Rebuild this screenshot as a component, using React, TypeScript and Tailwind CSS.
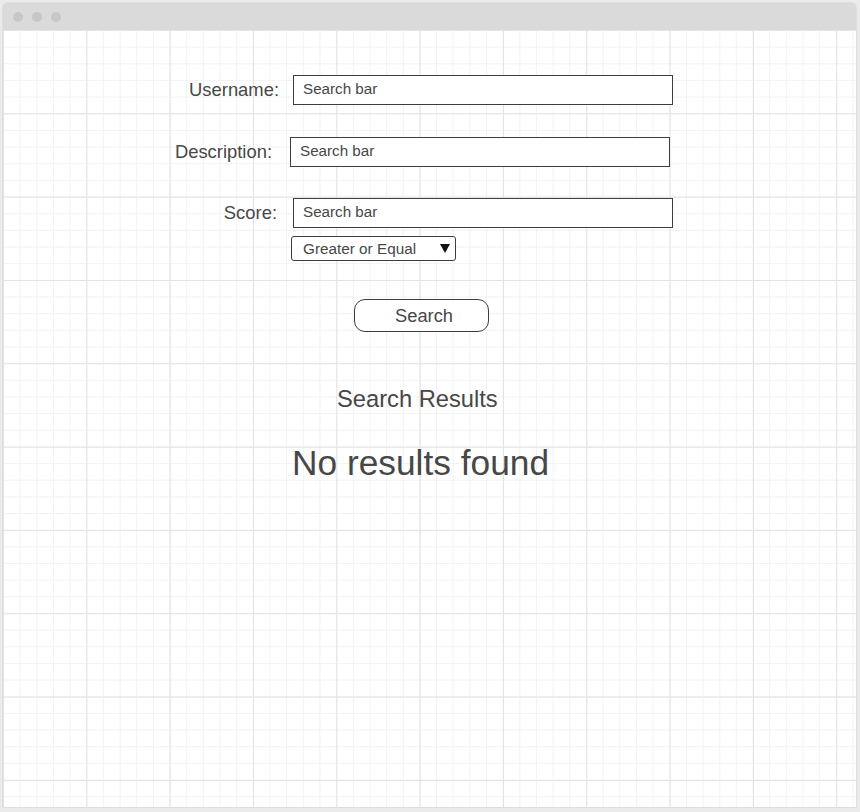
const fieldRows = [
  { label: "Username:", labelW: "w-[276px]", gap: "ml-[14px]", mt: "mt-[45px]" },
  { label: "Description:", labelW: "w-[269px]", gap: "ml-[18px]", mt: "mt-[32px]" },
  { label: "Score:", labelW: "w-[274px]", gap: "ml-[16px]", mt: "mt-[31px]" },
];

function SearchBar() {
  return (
    <div className="w-[380px] h-[30px] border border-[#3d3d3d] bg-white flex items-center pl-[9px] pb-[2px] text-[15.2px]">
      Search bar
    </div>
  );
}

export default function App() {
  return (
    <div
      className="w-[860px] h-[812px] bg-[#ebebeb] pt-[2px] pl-[2px] pr-[3px] pb-[4px] text-[#474747]"
      style={{ fontFamily: '"Liberation Sans", Arial, sans-serif' }}
    >
      <div className="w-full h-full flex flex-col border border-[#dedede] rounded-t-[5px] bg-white overflow-hidden">

        {/* Title bar */}
        <div className="h-[27px] shrink-0 bg-[#dadada] flex items-center pl-[10px] gap-[9px]">
          <div className="w-[10px] h-[10px] rounded-full bg-[#c7c7c7]" />
          <div className="w-[10px] h-[10px] rounded-full bg-[#c7c7c7]" />
          <div className="w-[10px] h-[10px] rounded-full bg-[#c7c7c7]" />
        </div>

        {/* Canvas */}
        <div className="flex-1 flex flex-col [background-image:linear-gradient(to_right,#e3e3e3_1px,transparent_1px),linear-gradient(to_bottom,#e3e3e3_1px,transparent_1px),linear-gradient(to_right,#f2f2f2_1px,transparent_1px),linear-gradient(to_bottom,#f2f2f2_1px,transparent_1px)] [background-size:83.33px_83.33px,83.33px_83.33px,16.67px_16.67px,16.67px_16.67px]">

          {fieldRows.map((row) => (
            <div key={row.label} className={`flex items-center h-[30px] ${row.mt}`}>
              <div className={`${row.labelW} text-right text-[18.4px] whitespace-nowrap`}>
                {row.label}
              </div>
              <div className={row.gap}>
                <SearchBar />
              </div>
            </div>
          ))}

          {/* Comparison select */}
          <div className="mt-[8px] ml-[288px] w-[165px] h-[25px] border border-[#3d3d3d] rounded-[3px] bg-white flex items-center justify-between pl-[11px] pr-[5px] pt-[2px] text-[15.3px]">
            <span>Greater or Equal</span>
            <svg width="10" height="9" viewBox="0 0 10 9" className="-mt-[2px]">
              <polygon points="0,0 10,0 5,9" fill="#111" />
            </svg>
          </div>

          {/* Search button */}
          <div className="mt-[38px] ml-[351px] w-[135px] h-[33px] border border-[#3d3d3d] rounded-[11px] bg-white flex items-center justify-center pl-[5px] text-[18.3px]">
            Search
          </div>

          <div className="mt-[53px] ml-[334px] h-[28px] leading-[28px] text-[23.7px] whitespace-nowrap">
            Search Results
          </div>

          <div className="mt-[30px] ml-[289px] h-[40px] leading-[40px] text-[35.3px] whitespace-nowrap">
            No results found
          </div>
        </div>
      </div>
    </div>
  );
}
